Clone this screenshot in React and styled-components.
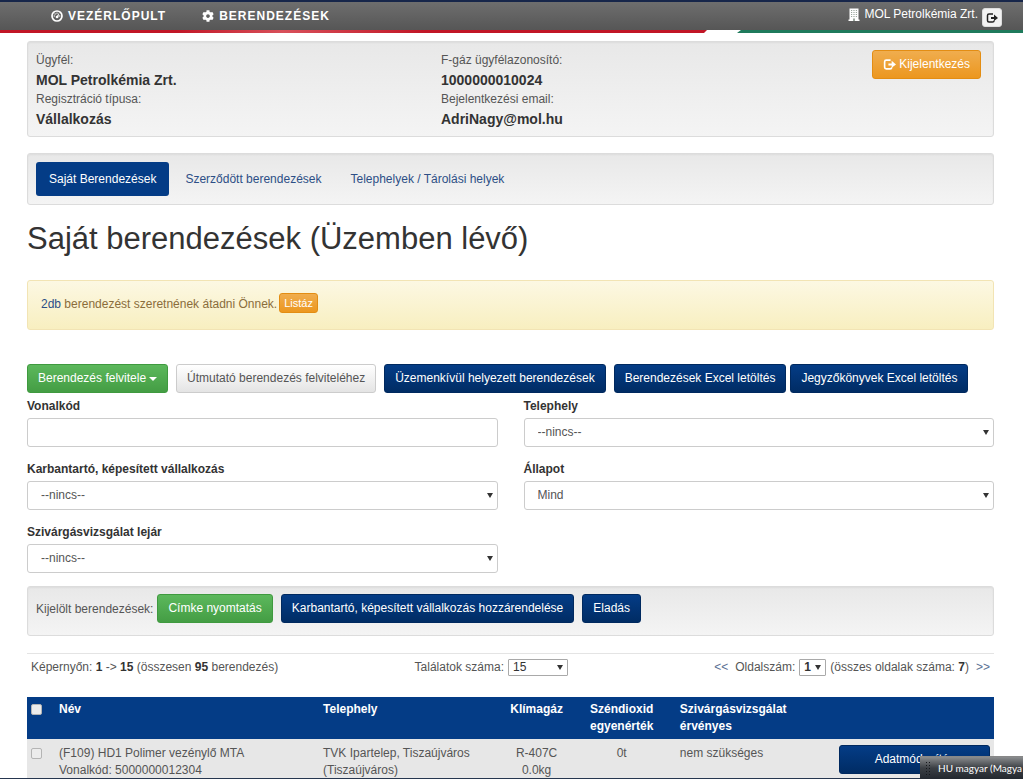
import React from "react";
import styled, { createGlobalStyle, css } from "styled-components";
import { FaCog } from "react-icons/fa";

const GlobalStyle = createGlobalStyle`
  *, *::before, *::after { box-sizing: border-box; }
  body {
    margin: 0;
    background: #fff;
    color: #555;
    font-family: "Liberation Sans", Arial, sans-serif;
    font-size: 12px;
    line-height: 17px;
    overflow-x: hidden;
  }
  button, input, select { font-family: inherit; font-size: inherit; line-height: inherit; }
  a { color: #2d4f86; text-decoration: none; }
  strong { color: #333; }
`;

const TopBar = styled.header`
  display: flex;
  align-items: center;
  justify-content: space-between;
  height: 30px;
  padding: 0 21px 0 51px;
  border-top: 2px solid #17264a;
  background: linear-gradient(#6e6e6e, #565656);
  color: #fff;
`;

const MainNav = styled.nav`
  display: flex;
  gap: 36px;
`;

const NavLink = styled.a`
  display: flex;
  align-items: center;
  gap: 5px;
  color: #fff;
  font-weight: bold;
  letter-spacing: 1px;
`;

const UserBox = styled.div`
  display: flex;
  align-self: flex-start;
  align-items: flex-start;
  gap: 4px;
  padding-top: 4px;
  & > svg { margin-top: 2px; }
`;

const IconButton = styled.button`
  display: flex;
  align-items: center;
  justify-content: center;
  width: 20px;
  height: 19px;
  margin-top: 2px;
  padding: 0;
  border: 1px solid #ddd;
  border-radius: 3px;
  background: #f2f2f2;
  color: #222;
`;

const Stripe = styled.div`
  display: flex;
  justify-content: space-between;
  height: 3px;
`;

const StripePart = styled.div`
  flex: ${(p) => p.$grow} 1 0;
  background: ${(p) => p.$color};
  clip-path: ${(p) => p.$clip};
`;

const StripeGap = styled.div`
  width: 30px;
`;

const Page = styled.main`
  padding: 8px 29px 0 27px;
`;

const Well = styled.section`
  border: 1px solid #dcdcdc;
  border-radius: 3px;
  background: linear-gradient(#e8e8e8, #f4f4f4);
  box-shadow: inset 0 1px 2px rgba(0, 0, 0, 0.05);
`;

const CustomerWell = styled(Well)`
  display: grid;
  grid-template-columns: 3fr 3fr 1fr;
  align-items: start;
  padding: 8px 12px 7px 8px;
`;

const Facts = styled.dl`
  margin: 0;
  padding-top: 1px;
  dt { line-height: 19px; }
  dd {
    margin: 0;
    color: #333;
    font-size: 14px;
    font-weight: bold;
    line-height: 20px;
  }
`;

const tones = {
  blue: css`
    border-color: #00295f;
    background: linear-gradient(#043c86, #002c64);
    color: #fff;
  `,
  green: css`
    border-color: #3f9a3f;
    background: linear-gradient(#5cb85c, #449d44);
    color: #fff;
  `,
  orange: css`
    border-color: #e38d13;
    background: linear-gradient(#f0ad4e, #ec971f);
    color: #fff;
  `,
  plain: css`
    border-color: #ccc;
    background: linear-gradient(#fff, #e4e4e4);
    color: #555;
  `,
};

const Button = styled.button`
  display: inline-flex;
  align-items: center;
  justify-content: center;
  gap: 3px;
  height: ${(p) => (p.$small ? 20 : 29)}px;
  padding: ${(p) => (p.$small ? "0 4px" : "0 10px")};
  border: 1px solid;
  border-radius: 3px;
  font-size: ${(p) => (p.$small ? 11 : 12)}px;
  white-space: nowrap;
  ${(p) => tones[p.$tone]}
`;

const LogoutButton = styled(Button)`
  justify-self: end;
`;

const TabWell = styled(Well)`
  display: flex;
  gap: 3px;
  margin-top: 16px;
  padding: 8px;
`;

const Tab = styled.a`
  padding: 9px 13px 8px;
  border-radius: 3px;
  background: ${(p) => (p.$active ? "#043c86" : "transparent")};
  color: ${(p) => (p.$active ? "#fff" : "#2d4f86")};
`;

const Title = styled.h1`
  margin: 17px 0 24px;
  color: #333;
  font-size: 31px;
  font-weight: normal;
  line-height: 34px;
`;

const Notice = styled.section`
  display: flex;
  align-items: flex-start;
  gap: 2px;
  height: 50px;
  padding: 12px 13px;
  border: 1px solid #f2e4b4;
  border-radius: 3px;
  background: linear-gradient(#fcf8e3, #f8efc0);
  color: #8a6d3b;
`;

const NoticeText = styled.span`
  padding-top: 3px;
`;

const Actions = styled.div`
  display: flex;
  gap: 8px;
  margin-top: 34px;
`;

const ActionPair = styled.div`
  display: flex;
  gap: 4px;
`;

const Caret = styled.span`
  border: 4px solid transparent;
  border-top-color: #fff;
  border-bottom: 0;
`;

const Filters = styled.form`
  display: grid;
  grid-template-columns: 1fr 1fr;
  gap: 14px 26px;
  margin: 5px 0 13px;
`;

const Field = styled.div`
  display: flex;
  flex-direction: column;
  gap: 3px;
  label { color: #333; font-weight: bold; }
`;

const control = css`
  width: 100%;
  height: 29px;
  padding: 0 13px;
  border: 1px solid #ccc;
  border-radius: 3px;
  background: #fff;
  color: #555;
`;

const TextInput = styled.input`
  ${control}
`;

const SelectWrap = styled.div`
  display: grid;
  align-items: center;
  & > * { grid-area: 1 / 1; }
`;

const Arrow = styled.span`
  justify-self: end;
  margin-right: 5px;
  border: 3px solid transparent;
  border-top: 5px solid #333;
  border-bottom: 0;
  pointer-events: none;
`;

const Select = styled.select`
  appearance: none;
  ${control}
`;

const SmallSelect = styled.select`
  appearance: none;
  width: ${(p) => (p.$wide ? 60 : 27)}px;
  height: 17px;
  padding: 0 4px;
  border: 1px solid #a9a9a9;
  border-radius: 1px;
  background: #fff;
  color: #333;
  line-height: 15px;
  font-weight: ${(p) => (p.$wide ? "normal" : "bold")};
`;

const BulkWell = styled(Well)`
  display: flex;
  gap: 8px;
  height: 50px;
  padding: 7px 8px;
`;

const BulkLabel = styled.span`
  margin-right: -4px;
  line-height: 31px;
`;

const Pager = styled.div`
  display: grid;
  grid-template-columns: 2fr 1fr 2fr;
  align-items: center;
  height: 27px;
  margin: 17px 0;
  padding: 0 4px;
  border-top: 1px solid #e4e4e4;
`;

const PagerGroup = styled.div`
  display: flex;
  align-items: center;
  justify-content: ${(p) => (p.$end ? "flex-end" : "flex-start")};
  gap: 4px;
  a { margin: 0 3px; color: #5a6f94; }
  a:last-child { margin-right: 0; }
`;

const Table = styled.table`
  width: 100%;
  border-collapse: collapse;
  table-layout: fixed;
  th, td {
    padding: 4px;
    text-align: left;
    vertical-align: top;
  }
  th { height: 42px; background: #043c86; color: #fff; }
  td { height: 48px; padding-top: 6px; background: #e7e7e7; }
  .center { text-align: center; }
`;

const Column = styled.col`
  width: ${(p) => p.$share}%;
`;

const Checkbox = styled.input`
  appearance: none;
  display: block;
  width: 11px;
  height: 11px;
  margin: 3px 0 0;
  border: 1px solid #b4b4b4;
  border-radius: 2px;
  background: #ececec;
`;

const RowButton = styled(Button)`
  width: 100%;
`;

const DesktopEdge = styled.div`
  position: fixed;
  right: 0;
  bottom: 0;
  left: 0;
  height: 1px;
  background: #26364f;
`;

const LanguageBar = styled.div`
  position: fixed;
  right: 0;
  bottom: 0;
  display: flex;
  align-items: center;
  gap: 6px;
  width: 103px;
  height: 23px;
  padding-left: 5px;
  border-top: 1px solid #888;
  background: linear-gradient(#8b8d8f, #3b3f44 50%, #23282f);
  color: #fff;
  font-family: Lato, "Open Sans", sans-serif;
  font-size: 10px;
  white-space: nowrap;
`;

const Grip = styled.span`
  flex: none;
  width: 7px;
  height: 15px;
  background: radial-gradient(circle, #14171a 1px, transparent 1px) 0 0 / 3px 3px;
`;

const GaugeIcon = () => (
  <svg width="12" height="12" viewBox="0 0 24 24" aria-hidden="true">
    <circle cx="12" cy="12" r="10" fill="none" stroke="currentColor" strokeWidth="3.4" />
    <path d="M10.5 13.5 16.5 5.5 14.5 15Z" fill="currentColor" />
    <circle cx="12" cy="14" r="2.6" fill="currentColor" />
    <g fill="currentColor">
      <circle cx="6.5" cy="12" r="1.3" />
      <circle cx="8.2" cy="8" r="1.3" />
      <circle cx="12" cy="6.3" r="1.3" />
      <circle cx="17.5" cy="12" r="1.3" />
    </g>
  </svg>
);

const BuildingIcon = () => (
  <svg width="12" height="13" viewBox="0 0 24 26" aria-hidden="true">
    <path d="M3 1H21V23H23V26H1V23H3Z" fill="#fff" />
    <path
      d="M6 5H18M6 9H18M6 13H18M6 17H18"
      stroke="#9aa69d"
      strokeWidth="2"
      strokeDasharray="2.400 2.400"
    />
    <path d="M10 21H14V26H10Z" fill="#9aa69d" />
  </svg>
);

const ExitIcon = ({ size = 13 }) => (
  <svg width={size} height={size} viewBox="0 0 24 24" aria-hidden="true">
    <path
      d="M14 4H6Q3 4 3 7V17Q3 20 6 20H13Q16 20 16 18V17"
      fill="none"
      stroke="currentColor"
      strokeWidth="3"
    />
    <path d="M10 10H16V5L24 12 16 18V14H10Z" fill="currentColor" />
  </svg>
);

const LabeledSelect = ({ id, label, value }) => (
  <Field>
    <label htmlFor={id}>{label}</label>
    <SelectWrap>
      <Select id={id}>
        <option>{value}</option>
      </Select>
      <Arrow />
    </SelectWrap>
  </Field>
);

const columnShares = [2.9, 27.3, 19.3, 6.4, 11.2, 16.5, 16.4];

export default function App() {
  return (
    <>
      <GlobalStyle />
      <TopBar>
        <MainNav>
          <NavLink href="#vezerlopult"><GaugeIcon />VEZÉRLŐPULT</NavLink>
          <NavLink href="#berendezesek"><FaCog size={12} />BERENDEZÉSEK</NavLink>
        </MainNav>
        <UserBox>
          <BuildingIcon />
          <span>MOL Petrolkémia Zrt.</span>
          <IconButton type="button" aria-label="Kijelentkezés"><ExitIcon size={12} /></IconButton>
        </UserBox>
      </TopBar>
      <Stripe>
        <StripePart
          $grow={707}
          $color="linear-gradient(90deg, #c11626 25%, #d8505a 40%, #c11626 60%)"
          $clip="polygon(0 0, 100% 0, calc(100% - 3px) 100%, 0 100%)"
        />
        <StripeGap />
        <StripePart $grow={286} $color="#1f7a5c" $clip="polygon(4px 0, 100% 0, 100% 100%, 0 100%)" />
      </Stripe>
      <Page>
        <CustomerWell>
          <Facts>
            <dt>Ügyfél:</dt>
            <dd>MOL Petrolkémia Zrt.</dd>
            <dt>Regisztráció típusa:</dt>
            <dd>Vállalkozás</dd>
          </Facts>
          <Facts>
            <dt>F-gáz ügyfélazonosító:</dt>
            <dd>1000000010024</dd>
            <dt>Bejelentkezési email:</dt>
            <dd>AdriNagy@mol.hu</dd>
          </Facts>
          <LogoutButton type="button" $tone="orange"><ExitIcon />Kijelentkezés</LogoutButton>
        </CustomerWell>
        <TabWell as="nav">
          <Tab href="#sajat" $active>Saját Berendezések</Tab>
          <Tab href="#szerzodott">Szerződött berendezések</Tab>
          <Tab href="#telephelyek">Telephelyek / Tárolási helyek</Tab>
        </TabWell>
        <Title>Saját berendezések (Üzemben lévő)</Title>
        <Notice>
          <NoticeText><a href="#atadas">2db</a> berendezést szeretnének átadni Önnek.</NoticeText>
          <Button type="button" $tone="orange" $small>Listáz</Button>
        </Notice>
        <Actions>
          <Button type="button" $tone="green">Berendezés felvitele<Caret /></Button>
          <Button type="button" $tone="plain">Útmutató berendezés felviteléhez</Button>
          <Button type="button" $tone="blue">Üzemenkívül helyezett berendezések</Button>
          <ActionPair>
            <Button type="button" $tone="blue">Berendezések Excel letöltés</Button>
            <Button type="button" $tone="blue">Jegyzőkönyvek Excel letöltés</Button>
          </ActionPair>
        </Actions>
        <Filters>
          <Field>
            <label htmlFor="vonalkod">Vonalkód</label>
            <TextInput id="vonalkod" type="text" />
          </Field>
          <LabeledSelect id="telephely" label="Telephely" value="--nincs--" />
          <LabeledSelect id="karbantarto" label="Karbantartó, képesített vállalkozás" value="--nincs--" />
          <LabeledSelect id="allapot" label="Állapot" value="Mind" />
          <LabeledSelect id="szivargas" label="Szivárgásvizsgálat lejár" value="--nincs--" />
        </Filters>
        <BulkWell>
          <BulkLabel>Kijelölt berendezések:</BulkLabel>
          <Button type="button" $tone="green">Címke nyomtatás</Button>
          <Button type="button" $tone="blue">Karbantartó, képesített vállalkozás hozzárendelése</Button>
          <Button type="button" $tone="blue">Eladás</Button>
        </BulkWell>
        <Pager>
          <span>Képernyőn: <strong>1</strong> -&gt; <strong>15</strong> (összesen <strong>95</strong> berendezés)</span>
          <PagerGroup>
            <label htmlFor="talalatok">Találatok száma:</label>
            <SelectWrap>
              <SmallSelect id="talalatok" $wide><option>15</option></SmallSelect>
              <Arrow />
            </SelectWrap>
          </PagerGroup>
          <PagerGroup $end>
            <a href="#elozo">&lt;&lt;</a>
            <label htmlFor="oldal">Oldalszám:</label>
            <SelectWrap>
              <SmallSelect id="oldal"><option>1</option></SmallSelect>
              <Arrow />
            </SelectWrap>
            <span>(összes oldalak száma: <strong>7</strong>)</span>
            <a href="#kovetkezo">&gt;&gt;</a>
          </PagerGroup>
        </Pager>
        <Table>
          <colgroup>
            {columnShares.map((share, i) => <Column key={i} $share={share} />)}
          </colgroup>
          <thead>
            <tr>
              <th><Checkbox type="checkbox" aria-label="Összes kijelölése" /></th>
              <th>Név</th>
              <th>Telephely</th>
              <th className="center">Klímagáz</th>
              <th className="center">Széndioxid egyenérték</th>
              <th>Szivárgásvizsgálat érvényes</th>
              <th />
            </tr>
          </thead>
          <tbody>
            <tr>
              <td><Checkbox type="checkbox" aria-label="(F109) HD1 Polimer vezénylő MTA" /></td>
              <td>(F109) HD1 Polimer vezénylő MTA<br />Vonalkód: 5000000012304</td>
              <td>TVK Ipartelep, Tiszaújváros (Tiszaújváros)</td>
              <td className="center">R-407C<br />0.0kg</td>
              <td className="center">0t</td>
              <td>nem szükséges</td>
              <td><RowButton type="button" $tone="blue">Adatmódosítás</RowButton></td>
            </tr>
          </tbody>
        </Table>
      </Page>
      <DesktopEdge />
      <LanguageBar><Grip />HU magyar (Magya</LanguageBar>
    </>
  );
}
